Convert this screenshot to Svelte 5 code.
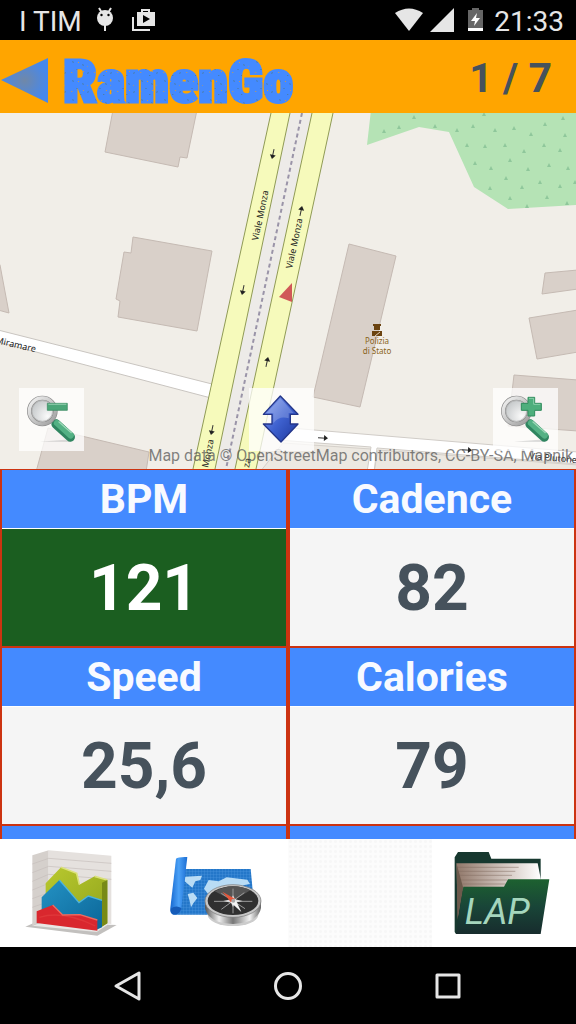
<script lang="ts">
  let page = $state(1);
  const pageCount = 7;

  const metrics = [
    { label: 'BPM', value: '121', active: true },
    { label: 'Cadence', value: '82', active: false },
    { label: 'Speed', value: '25,6', active: false },
    { label: 'Calories', value: '79', active: false },
    { label: 'Power', value: '0', active: false },
    { label: 'In Gear', value: '0', active: false },
  ];

  const buildings = [
    '113,110 197,110 187,158 180,157 178,167 105,152',
    '133,237 212,251 197,331 118,317 120,301 116,299 124,252 131,253',
    '-2,262 0,265 9,313 -2,310',
    '48,428 149,452 146,472 36,472',
    '349,244 396,256 360,407 313,397',
    '545,273 578,270 578,289 542,294',
    '529,318 578,310 578,352 537,359',
    '514,375 578,380 578,431 508,426',
  ];

  const trees = [
    [384, 131], [399, 127], [414, 117], [435, 126], [457, 130], [473, 126], [484, 114],
    [495, 130], [514, 128], [531, 134], [545, 124], [563, 118], [565, 135], [467, 145],
    [485, 146], [505, 145], [524, 151], [544, 145], [560, 150], [475, 163], [491, 168],
    [510, 160], [528, 169], [549, 165], [568, 168], [506, 178], [490, 188], [522, 187],
    [540, 182], [560, 186], [575, 182], [510, 198], [547, 197], [527, 206], [567, 203],
  ];

  // x, y, rotation of the one-way arrows, pointing right at 0
  const arrows = [
    [273, 154, 102], [243, 290, 102], [267, 362, -78], [301, 211, -78],
    [212, 430, 102], [323, 438, 4], [467, 450, 4],
  ];

  function nextPage() {
    page = page < pageCount ? page + 1 : 1;
  }

  function prevPage() {
    page = page > 1 ? page - 1 : pageCount;
  }
</script>

{#snippet magnifier(plus: boolean)}
  <svg class="map-icon" viewBox="57 294 195 189" aria-hidden="true">
    <defs>
      <linearGradient id="ring" x1="0" y1="0" x2="1" y2="1">
        <stop offset="0" stop-color="#f4f4f4" />
        <stop offset="1" stop-color="#9c9c9c" />
      </linearGradient>
      <radialGradient id="lens" cx="0.7" cy="0.7" r="0.8">
        <stop offset="0" stop-color="#fafafa" />
        <stop offset="1" stop-color="#bcc0c2" />
      </radialGradient>
    </defs>
    <path d="M120 455l75-6 22 7z" fill="#bbb" opacity=".5" />
    <path d="M155 397l14-10 12 8-16 17z" fill="#a9a9a9" />
    <path d="M168 402L211 441" stroke="#2f8560" stroke-width="28" stroke-linecap="round" />
    <path d="M171 399L212 436" stroke="#53b184" stroke-width="19" stroke-linecap="round" />
    <path d="M177 396L214 428" stroke="#9bd6b6" stroke-width="4" stroke-linecap="round" />
    <circle cx="127" cy="363" r="39" fill="url(#lens)" stroke="#8a8a8a" stroke-width="14" />
    <circle cx="127" cy="363" r="39" fill="none" stroke="url(#ring)" stroke-width="10" />
    <circle cx="127" cy="363" r="31" fill="none" stroke="#aaa" stroke-width="2" />
    {#if plus}
      <path d="M162 322h20v18h20v21h-20v17h-20v-17h-20v-21h20z" fill="#4eae7c" stroke="#2f8b5c" stroke-width="3" />
      <path d="M165 325h14v18h20" fill="none" stroke="#8bcfab" stroke-width="3" />
    {:else}
      <path d="M142 340h60v21h-60z" fill="#4ba678" stroke="#34855c" stroke-width="2" />
      <path d="M145 343h54" stroke="#83c5a3" stroke-width="4" />
    {/if}
  </svg>
{/snippet}

<div class="screen">
  <div class="status-bar">
    <span class="status-text">I TIM</span>
    <svg class="droid" width="18" height="26" viewBox="0 0 18 26" aria-hidden="true">
      <path d="M3 1l3 5M15 1l-3 5M9 18v6" stroke="#e6e6e6" stroke-width="2" />
      <circle cx="9" cy="11" r="8" fill="#e6e6e6" />
      <circle cx="5.5" cy="8" r="1.2" fill="#000" />
      <circle cx="12.5" cy="8" r="1.2" fill="#000" />
    </svg>
    <svg class="shop" width="24" height="24" viewBox="0 0 24 24" aria-hidden="true">
      <path d="M1 9v13h17" fill="none" stroke="#e6e6e6" stroke-width="2" />
      <path d="M5 4h18v14H5z" fill="#e6e6e6" />
      <path d="M10 5V2h7v3" fill="none" stroke="#e6e6e6" stroke-width="2" />
      <path d="M11 7l7 4-7 4z" fill="#000" />
    </svg>
    <span class="spacer"></span>
    <svg width="28" height="24" viewBox="0 0 28 24" aria-hidden="true">
      <path d="M0 5Q14-4 28 5L14 23z" fill="#e6e6e6" />
    </svg>
    <svg class="signal" width="24" height="24" viewBox="0 0 24 24" aria-hidden="true">
      <path d="M24 0v24H0z" fill="#e6e6e6" />
    </svg>
    <svg class="battery" width="15" height="24" viewBox="0 0 15 24" aria-hidden="true">
      <path d="M4 0h7v2h4v18H0V2h4z" fill="#666" />
      <path d="M0 20h15v3H0z" fill="#fff" />
      <path d="M9 5l-6 8h4l-1 5 6-8H8z" fill="#fff" />
    </svg>
    <span class="status-text">21:33</span>
  </div>

  <header>
    <button class="logo" aria-label="Back" onclick={prevPage}>
      <svg width="310" height="73" viewBox="0 0 310 73">
        <defs>
          <radialGradient id="back">
            <stop offset="0" stop-color="#7088a8" />
            <stop offset="1" stop-color="#4588ee" />
          </radialGradient>
          <pattern id="grunge" width="23" height="19" patternUnits="userSpaceOnUse">
            <rect width="23" height="19" fill="#448aff" />
            <path d="M3 2l2 1-1 1zM14 5l1 2-2-1zM7 10h2l-1 1zM19 13l1 1-2 1zM11 16l2 1h-2z" fill="#4a7a96" />
            <path d="M9 3h1v1h-1zM18 7l1 1h-1zM2 13l2 1H2zM14 12h1v1h-1z" fill="#c79a50" />
          </pattern>
        </defs>
        <path d="M1 40L48 18V63z" fill="url(#back)" />
        <text class="logo-text" x="63" y="62" fill="url(#grunge)" stroke="url(#grunge)">RamenGo</text>
      </svg>
    </button>
    <button class="pager" onclick={nextPage}>{page} / {pageCount}</button>
  </header>

  <div class="map">
    <svg class="tiles" viewBox="0 113 576 356" preserveAspectRatio="xMidYMid slice">
      <rect y="113" width="576" height="356" fill="#f1eee8" />
      <path d="M371 110L367 145L419 127L449 132L474 187L508 209L578 205V110z" fill="#b5e3b5" />
      {#each trees as [x, y]}
        <path d="M{x - 2} {y + 2}l2-4 2 4z" fill="#8fc79b" />
      {/each}
      {#each buildings as points}
        <polygon {points} fill="#d9d0c9" stroke="#c5bab3" />
      {/each}

      <path d="M283 443L371 449L368 472H260zM378 450L578 465V472H374z" fill="#ece8e1" stroke="#d5d0ca" />
      <path d="M-2 330L216 385L211 398L-2 342z" fill="#fff" stroke="#c9c5c0" />
      <path d="M278 427L578 452V464L377 448L374 472H367L371 447L278 440z" fill="#fff" stroke="#d0ccc7" />
      <path d="M290 113H312L235 469H215z" fill="#edebe8" />
      <path d="M271 113H290L215 469H193zM312 113H333L256 469H235z" fill="#f6fabb" />
      <path d="M271 113L193 469M290 113L215 469M312 113L235 469M333 113L256 469" stroke="#8f9a55" />
      <path d="M302 113L226 469" stroke="#9a94a8" stroke-width="2" stroke-dasharray="4 3" />
      <path d="M214 384L211 399" stroke="#f6fabb" stroke-width="3" />

      {#each arrows as [x, y, angle]}
        <g transform="translate({x} {y}) rotate({angle})">
          <path d="M-5 0H3" stroke="#333" />
          <path d="M1-3L5 0L1 3z" fill="#222" />
        </g>
      {/each}

      <g class="street">
        <text transform="translate(258 241) rotate(-78)">Viale Monza</text>
        <text transform="translate(292 269) rotate(-78)">Viale Monza</text>
        <text transform="translate(208 468) rotate(-78)">Monza</text>
        <text transform="translate(249 468) rotate(-78)">za</text>
        <text transform="translate(-5 343) rotate(13)">Miramare</text>
        <text transform="translate(529 459) rotate(5)">Via Plutone</text>
      </g>

      <g fill="#6b4310">
        <path d="M373 324h8v2h-1v4h-6v-4h-1zM372 331h10v5h-10z" />
        <path d="M375 336l5-4" stroke="#e0d0bd" />
      </g>
      <g class="poi">
        <text x="377" y="344">Polizia</text>
        <text x="377" y="354">di Stato</text>
      </g>
      <path d="M279 297L292 283V302z" fill="#d05858" />
    </svg>

    <p class="attribution">Map data © OpenStreetMap contributors, CC-BY-SA, Mapnik</p>

    <div class="map-controls">
      <button aria-label="Zoom out">{@render magnifier(false)}</button>
      <button class="center-map" aria-label="Center map">
        <svg class="map-icon" viewBox="0 0 195 189" aria-hidden="true">
          <defs>
            <linearGradient id="blue" x1="0" y1="0" x2="1" y2="1">
              <stop offset="0" stop-color="#8aa4f0" />
              <stop offset="0.5" stop-color="#3f62d0" />
              <stop offset="1" stop-color="#1c369c" />
            </linearGradient>
          </defs>
          <path
            d="M94 24L147 79H124V108H147L96 162L43 108H69V79H43z"
            fill="url(#blue)"
            stroke="#24368a"
            stroke-width="4"
            stroke-linejoin="round"
          />
          <path d="M94 31L134 75H119V91Q90 82 73 106V75H53z" fill="#fff" opacity=".2" />
        </svg>
      </button>
      <button aria-label="Zoom in">{@render magnifier(true)}</button>
    </div>
  </div>

  <main class="metrics">
    {#each metrics as metric (metric.label)}
      <section class="metric">
        <h2>{metric.label}</h2>
        <p class:active={metric.active}>{metric.value}</p>
      </section>
    {/each}
  </main>

  <nav class="toolbar">
    <button aria-label="Charts">
      <svg viewBox="72 75 288 288" aria-hidden="true">
        <defs>
          <linearGradient id="lime" x1="0" y1="0" x2="1" y2="1">
            <stop offset="0" stop-color="#b9c92f" />
            <stop offset="1" stop-color="#8fa31b" />
          </linearGradient>
          <linearGradient id="sea" x1="0" y1="0" x2="1" y2="1">
            <stop offset="0" stop-color="#2492c4" />
            <stop offset="1" stop-color="#0b6698" />
          </linearGradient>
        </defs>
        <path d="M76 320L108 306L350 315L292 347z" fill="#c2c0be" />
        <path d="M97 317L145 300L330 310L290 336z" fill="#e9e7e5" />
        <path d="M97 106L146 91V290L97 317z" fill="#d5d0cc" />
        <path d="M146 91L334 107V312L146 290z" fill="#e5e1de" />
        <path
          d="M97 132L146 115L334 130M97 158L146 139L334 154M97 184L146 163L334 178M97 210L146 190M97 236L146 218M97 262L146 245"
          fill="none"
          stroke="#c6bebb"
          stroke-width="2"
        />
        <path d="M137 190L183 142L230 160L238 194L284 169L322 180V310L300 322L137 270z" fill="url(#lime)" />
        <path d="M183 142L230 160L238 194M284 169L322 180" fill="none" stroke="#dbe27a" stroke-width="5" />
        <path d="M306 188L322 180V310L306 320z" fill="#788a16" />
        <path d="M125 232L178 180L237 248L265 228L306 241V322L288 330L125 285z" fill="url(#sea)" />
        <path d="M178 180L237 248L265 228L306 241" fill="none" stroke="#4cb3dc" stroke-width="4" />
        <path d="M110 274L158 255L188 285L240 284L292 300V332L110 309z" fill="#d9272e" />
        <path d="M158 255L188 285L240 284L292 300" fill="none" stroke="#ee6b60" stroke-width="4" />
        <path d="M118 292Q190 270 286 318" fill="none" stroke="#ee5a54" stroke-width="4" opacity=".3" />
      </svg>
    </button>
    <button aria-label="Map">
      <svg viewBox="504 75 288 288" aria-hidden="true">
        <defs>
          <linearGradient id="roll" x1="0" x2="1">
            <stop offset="0" stop-color="#1668cf" />
            <stop offset="0.5" stop-color="#4ba1f7" />
            <stop offset="1" stop-color="#1c6ed3" />
          </linearGradient>
          <linearGradient id="chrome" x1="0" x2="1">
            <stop offset="0" stop-color="#555" />
            <stop offset="0.25" stop-color="#eee" />
            <stop offset="0.5" stop-color="#777" />
            <stop offset="0.8" stop-color="#f2f2f2" />
            <stop offset="1" stop-color="#666" />
          </linearGradient>
          <pattern id="mesh" width="9" height="9" patternUnits="userSpaceOnUse">
            <rect width="9" height="9" fill="#2477c9" />
            <path d="M0 0H9M0 0V9" stroke="#4b97df" stroke-width="2" />
          </pattern>
        </defs>
        <path d="M550 147H752L765 284H525z" fill="url(#mesh)" />
        <path
          d="M556 170L606 167L601 180L586 184L577 203L568 196L554 184zM563 222L580 218L592 234L580 250L573 262L569 242zM612 206L626 180L656 184L680 172L742 179L750 192L730 196L724 210L640 214L626 224z"
          fill="#b9dcf5"
        />
        <path d="M528 116Q534 110 562 111L544 264Q541 284 522 284Q509 282 511 264z" fill="url(#roll)" />
        <path d="M512 266Q528 254 544 264Q541 284 522 284Q511 282 512 266z" fill="#155bb8" />
        <ellipse cx="699" cy="284" rx="76" ry="34" fill="#ccc" />
        <path d="M615 240V264Q625 310 699 312Q775 308 783 264V240z" fill="url(#chrome)" />
        <ellipse cx="699" cy="243" rx="84" ry="49" fill="#c7c7c7" stroke="#777" stroke-width="2" />
        <ellipse cx="699" cy="242" rx="76" ry="43" fill="#303030" />
        <path d="M644 214Q699 185 751 211L699 242z" fill="#555" />
        <path d="M699 206V280M642 244H757M664 220L735 266M733 218L664 268" stroke="#9a9a9a" stroke-width="3" />
        <path d="M699 226L705 238L728 243L705 248L699 261L693 248L670 243L693 238z" fill="#ddd" />
        <path d="M667 215L706 237L694 248z" fill="#e5583c" />
        <path d="M706 237L724 276L692 247z" fill="#f4f4f4" />
        <circle cx="700" cy="242" r="6" fill="#aaa" />
      </svg>
    </button>
    <span class="empty"></span>
    <button aria-label="Lap">
      <svg viewBox="502 75 288 288" aria-hidden="true">
        <defs>
          <linearGradient id="folder" x1="0" y1="0" x2="0" y2="1">
            <stop offset="0" stop-color="#1d6130" />
            <stop offset="0.5" stop-color="#194538" />
            <stop offset="1" stop-color="#172c2d" />
          </linearGradient>
          <linearGradient id="paper" x1="0" x2="1">
            <stop offset="0" stop-color="#91786a" />
            <stop offset="0.6" stop-color="#d5cac4" />
            <stop offset="1" stop-color="#fff" />
          </linearGradient>
        </defs>
        <path d="M498 112L508 96H600L608 116H756V200L740 342H502L498 336z" fill="#17382f" />
        <path d="M503 130H747L757 180L650 205L520 212L508 290z" fill="url(#paper)" />
        <path
          d="M505 142H690M508 154H680M511 166H670M516 180H655M521 192H650"
          stroke="#836d61"
          stroke-width="3"
          opacity=".5"
        />
        <path d="M504 132L524 205L506 300z" fill="#6d5a4c" />
        <path d="M524 200H646L658 178H782L756 342H502z" fill="url(#folder)" />
        <text class="lap" x="528" y="311">LAP</text>
      </svg>
    </button>
  </nav>

  <nav class="system-nav">
    <button aria-label="System back">
      <svg width="32" height="32" viewBox="0 0 32 32"><path d="M4 16L27 3V29z" /></svg>
    </button>
    <button aria-label="Home">
      <svg width="32" height="32" viewBox="0 0 32 32"><circle cx="16" cy="16" r="12.5" /></svg>
    </button>
    <button aria-label="Recent apps">
      <svg width="32" height="32" viewBox="0 0 32 32"><path d="M5 5H27V27H5z" /></svg>
    </button>
  </nav>
</div>

<style>
  :global(body) {
    margin: 0;
    background: #000;
  }

  .screen {
    display: flex;
    flex-direction: column;
    height: 100vh;
    font-family: Roboto, 'Noto Sans', sans-serif;
    overflow: hidden;
  }

  button {
    padding: 0;
    border: none;
    background: none;
    font-family: inherit;
    cursor: pointer;
  }

  svg {
    display: block;
  }

  .status-bar {
    display: flex;
    flex: none;
    align-items: center;
    height: 40px;
    padding: 0 12px 0 19px;
    background: #000;
    color: #e6e6e6;
  }

  .status-text {
    padding-top: 3px;
    font-size: 28px;
    line-height: 37px;
  }

  .droid {
    margin-left: 14px;
  }

  .shop {
    margin-left: 18px;
  }

  .spacer {
    flex: 1;
  }

  .signal {
    margin-left: 7px;
  }

  .battery {
    margin: 0 11px 0 14px;
  }

  header {
    display: flex;
    flex: none;
    align-items: center;
    justify-content: space-between;
    height: 73px;
    padding-right: 24px;
    background: #ffa500;
  }

  .logo-text {
    font-family: 'Roboto Condensed', Roboto, sans-serif;
    font-size: 60px;
    font-weight: 900;
    stroke-width: 3px;
  }

  .pager {
    padding-top: 2px;
    color: #46525c;
    font-size: 41px;
    font-weight: 700;
  }

  .map {
    position: relative;
    flex: none;
    aspect-ratio: 576 / 356;
    overflow: hidden;
  }

  .tiles {
    width: 100%;
    height: 100%;
  }

  .street {
    fill: #222;
    font-family: 'Noto Sans', sans-serif;
    font-size: 9px;
  }

  .poi {
    fill: #8a6420;
    font-family: 'Noto Sans', sans-serif;
    font-size: 8px;
    text-anchor: middle;
  }

  .attribution {
    position: absolute;
    right: 3px;
    bottom: 3px;
    margin: 0;
    color: rgba(90, 90, 90, 0.75);
    font-size: 16px;
    line-height: 20px;
    white-space: nowrap;
  }

  .map-controls {
    position: absolute;
    right: 18px;
    bottom: 18px;
    left: 19px;
    display: flex;
    justify-content: space-between;
  }

  .map-controls button {
    background: rgba(255, 255, 255, 0.75);
  }

  .map-controls .center-map {
    margin-right: 15px;
  }

  .map-icon {
    width: 65px;
    height: 63px;
  }

  .metrics {
    display: grid;
    flex: 1;
    grid-template-columns: 1fr 1fr;
    grid-auto-rows: 178px;
    min-height: 0;
    overflow-y: auto;
    background: #fff;
    scrollbar-width: none;
  }

  .metric {
    display: flex;
    flex-direction: column;
    border: 1px solid #cc3311;
    border-width: 1px 2px;
    text-align: center;
  }

  .metric h2 {
    margin: 0 0 1px;
    background: #448aff;
    color: #f8faff;
    font-size: 41px;
    font-weight: 700;
    line-height: 58px;
  }

  .metric p {
    flex: 1;
    margin: 0;
    padding-top: 3px;
    background: #f5f5f5;
    color: #46525c;
    font-size: 64px;
    font-weight: 700;
    line-height: 114px;
  }

  .metric p.active {
    background: #1b5e20;
    color: #fff;
  }

  .toolbar {
    display: grid;
    flex: none;
    grid-template-columns: repeat(4, 1fr);
    height: 108px;
    background: #fff;
  }

  .toolbar button {
    display: flex;
    align-items: center;
    justify-content: center;
  }

  .toolbar svg {
    width: 96px;
    height: 96px;
    overflow: visible;
  }

  .empty {
    background: radial-gradient(circle, #f7f7f7 1px, #fcfcfc 2px) 0 0 / 5px 5px;
  }

  .lap {
    fill: #a5d6bd;
    font-family: Roboto, sans-serif;
    font-size: 110px;
    font-style: italic;
  }

  .system-nav {
    display: flex;
    flex: none;
    justify-content: center;
    height: 77px;
    background: #000;
  }

  .system-nav button {
    display: flex;
    align-items: center;
    justify-content: center;
    width: 160px;
  }

  .system-nav svg {
    fill: none;
    stroke: #e6e6e6;
    stroke-linejoin: round;
    stroke-width: 3px;
  }
</style>
